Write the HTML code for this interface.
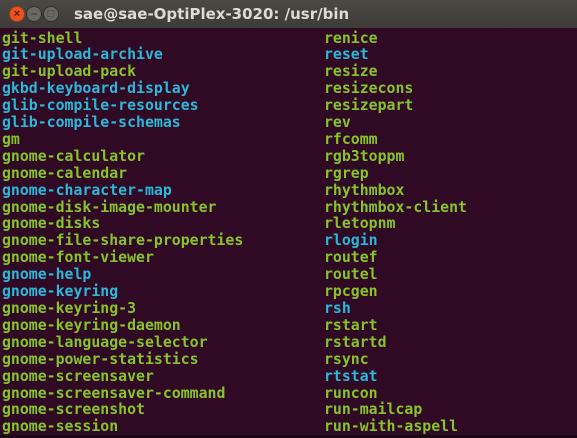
<!DOCTYPE html><html><head><style>
body{margin:0;width:577px;height:438px;overflow:hidden;background:#300a24;position:relative}
.bar{position:absolute;left:0;top:0;width:577px;height:28px;background:linear-gradient(#4a4944,#3c3b37);}
.t{position:absolute;left:74px;top:5px;font:bold 15px "DejaVu Sans","Liberation Sans",sans-serif;color:#dfdbd2}
.b{position:absolute;top:6px;width:16px;height:16px;border-radius:50%;background:#6a6862;border:1px solid #33322e;box-sizing:border-box;color:#3c3b37;font:bold 11px/14px sans-serif;text-align:center}
.col{position:absolute;top:29.5px;font:bold 14.85px/16.9px "DejaVu Sans Mono",monospace;color:#87c42a;white-space:pre}
.c{color:#2cb8d8}
.bot{position:absolute;left:0;bottom:0;width:577px;height:3px;background:#1a0a14}
</style></head><body>
<div class="bar"></div>
<div class="b" style="left:9px;background:#e95420;border-color:#a33a14;color:#5a1a08">×</div>
<div class="b" style="left:26px">–</div>
<div class="b" style="left:43px">□</div>
<div class="t">sae@sae-OptiPlex-3020: /usr/bin</div>
<div class="col" style="left:2px">git-shell
<span class="c">git-upload-archive</span>
git-upload-pack
<span class="c">gkbd-keyboard-display</span>
<span class="c">glib-compile-resources</span>
<span class="c">glib-compile-schemas</span>
gm
gnome-calculator
gnome-calendar
<span class="c">gnome-character-map</span>
gnome-disk-image-mounter
gnome-disks
gnome-file-share-properties
gnome-font-viewer
<span class="c">gnome-help</span>
<span class="c">gnome-keyring</span>
gnome-keyring-3
gnome-keyring-daemon
gnome-language-selector
gnome-power-statistics
gnome-screensaver
gnome-screensaver-command
gnome-screenshot
gnome-session</div>
<div class="col" style="left:324px">renice
<span class="c">reset</span>
resize
resizecons
resizepart
rev
rfcomm
rgb3toppm
rgrep
rhythmbox
rhythmbox-client
rletopnm
<span class="c">rlogin</span>
routef
routel
rpcgen
<span class="c">rsh</span>
rstart
rstartd
rsync
<span class="c">rtstat</span>
runcon
run-mailcap
run-with-aspell</div>
<div class="bot"></div>
</body></html>
